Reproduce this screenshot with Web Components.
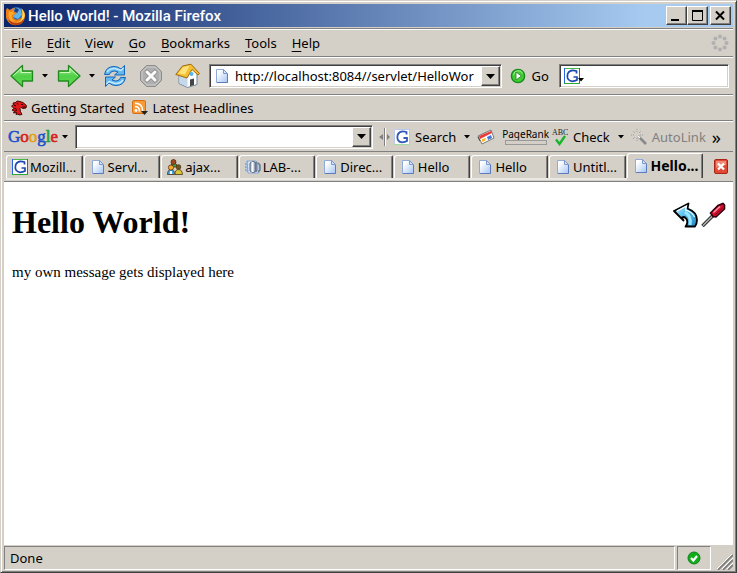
<!DOCTYPE html>
<html lang="en">
<head>
<meta charset="utf-8">
<title>Hello World! - Mozilla Firefox</title>
<style>
  html, body { height: 100%; margin: 0; }
  body { font: 13px/18px "Noto Sans", "Open Sans", sans-serif; color: #000; background: #d4d0c8; }
</style>
</head>
<body>
<browser-window>
  <title-bar slot="chrome">Hello World! - Mozilla Firefox</title-bar>
  <menu-bar slot="chrome"></menu-bar>
  <nav-bar slot="chrome"></nav-bar>
  <bookmark-bar slot="chrome">
    <book-mark icon="dino">Getting Started</book-mark>
    <book-mark icon="rss">Latest Headlines</book-mark>
  </bookmark-bar>
  <google-bar slot="chrome"></google-bar>
  <tab-strip slot="chrome">
    <page-tab icon="g">Mozill...</page-tab>
    <page-tab icon="page">Servl...</page-tab>
    <page-tab icon="people">ajax...</page-tab>
    <page-tab icon="lab">LAB-...</page-tab>
    <page-tab icon="page">Direc...</page-tab>
    <page-tab icon="page">Hello</page-tab>
    <page-tab icon="page">Hello</page-tab>
    <page-tab icon="page">Untitl...</page-tab>
    <page-tab icon="page" active>Hello...</page-tab>
  </tab-strip>
  <hello-page></hello-page>
  <status-bar slot="status">Done</status-bar>
</browser-window>
<script>
const ICONS = {
  firefox: [20, 20, `<circle cx="10.500" cy="9" r="8" fill="#2a62b8"/><path d="M7 3q4-3 8 1l1 5-4 4-5-2z" fill="#5fb4e8"/><path d="M9 2q3 0 4 2l-2 3-3-1z" fill="#1c3f8c"/><path d="M1 2l3 2q2-2 5-2L7 5l4 2-3 2-1 2q2 4 6 2 4-1 3-6l-1-5q5 4 4 9-1 7-8 8-7 1-10-5-3-6 0-12z" fill="#ee7d16"/><path d="M3 5l2 1 3-1-1 2 2 1-3 1q-1 5 4 6-5 2-7-3-1-3 0-7z" fill="#f9a92c"/><path d="M16 3q4 5 2 9-3 5-8 4 6 0 6-5 1-3 0-8z" fill="#fce05a"/><path d="M2 13q4 5 10 4 4-1 6-4-2 6-8 6t-8-6z" fill="#b63c12"/>`],
  back: [26, 24, `<defs><linearGradient id="a" x2="0" y2="1"><stop stop-color="#b4f0a0"/><stop offset=".5" stop-color="#4fd048"/><stop offset="1" stop-color="#64dc50"/></linearGradient></defs><path d="M2 12L13.500 1.500V7H23.500V17H13.500V22.500z" fill="url(#a)" stroke="#218a1f" stroke-width="1.300" stroke-linejoin="round"/><path d="M4 12l8-7.500V8.500H22" fill="none" stroke="#d0f8c0"/>`],
  forward: [26, 24, `<defs><linearGradient id="a" x2="0" y2="1"><stop stop-color="#b4f0a0"/><stop offset=".5" stop-color="#4fd048"/><stop offset="1" stop-color="#64dc50"/></linearGradient></defs><path d="M24 12L12.500 1.500V7H2.500V17H12.500V22.500z" fill="url(#a)" stroke="#218a1f" stroke-width="1.300" stroke-linejoin="round"/><path d="M22 12l-8-7.500V8.500H4" fill="none" stroke="#d0f8c0"/>`],
  reload: [24, 24, `<g stroke="#1766b8" fill="#64b8f0" stroke-linejoin="round"><path d="M1.500 10.500Q3 2.500 11 2.500q4 0 7 2.500l3.500-3.500v9.500h-10l3.500-3q-4-2-7 0-1 1-1.500 2.500z"/><path d="M22.500 13.500Q21 21.500 13 21.500q-4 0-7-2.500l-3.500 3.500V13h10l-3.500 3q4 2 7 0 1-1 1.500-2.500z"/></g><path d="M4 8q3-4 8-3.500l6 2 2.500-2.500M20 16q-3 4-8 3.500l-6-2-2.500 2.500" fill="none" stroke="#c4ecff" stroke-width="1.500"/>`],
  stop: [24, 24, `<path d="M7.500 1.500h9l6 6v9l-6 6h-9l-6-6v-9z" fill="#b0b0b0" stroke="#8c8c8c"/><path d="M8 3h8l5 5v8l-5 5H8l-5-5V8z" fill="none" stroke="#c8c8c8"/><path d="M8 8l8 8M16 8l-8 8" stroke="#969696" stroke-width="5" stroke-linecap="round"/><path d="M8 8l8 8M16 8l-8 8" stroke="#fafafa" stroke-width="3" stroke-linecap="round"/>`],
  home: [26, 26, `<path d="M4 11v9.500l8.500 4L22 21.500V11L17 5z" fill="#fff" stroke="#73869c"/><path d="M4.500 11.500l8 2.500v10l-8-4z" fill="#c4d8ec"/><path d="M.800 11.500L7.500 3 16 1.200 24.500 10.500l-1.500 1.500L17 6.500 12 15z" fill="#f3bf30" stroke="#a06a10" stroke-linejoin="round"/><path d="M3 10.500L8.500 4l6-1.200-4.500 8.700z" fill="#ffe27c"/><path d="M15 16.500l4-1V22l-4 1.300z" fill="#444"/><circle cx="16.500" cy="11" r="2" fill="#54b3f0"/>`],
  page: [16, 16, `<defs><linearGradient id="a" x2="1" y2="1"><stop offset=".2" stop-color="#fff"/><stop offset="1" stop-color="#a4c4f4"/></linearGradient></defs><path d="M2.500 1.500h7l4 4v9h-11z" fill="url(#a)" stroke="#8fabdc"/><path d="M13.500 6v8.500H3" fill="none" stroke="#5c7cbc"/><path d="M9.500 1.500v4h4z" fill="#d4e4fc" stroke="#8098cc"/>`],
  go: [16, 16, `<circle cx="8" cy="8" r="6.600" fill="#3fcf35" stroke="#178b18" stroke-width="1.400"/><path d="M3.500 7Q4 3 8 2.700t4.500 3" fill="none" stroke="#a4f09a"/><path d="M6 4l5.500 4L6 12z" fill="#fff" stroke="#1d7d1c" stroke-width=".8"/>`],
  g: [16, 16, `<path fill="#fff" d="M0 0h16v16H0z"/><path d="M0 .500h16" stroke="#4ab848"/><path d="M.500 0v16" stroke="#2864e0"/><path d="M15.500 0v16" stroke="#e02820"/><path d="M0 15.500h16" stroke="#30a838"/><path d="M12.500 5.500V3Q6 .800 3.800 5.500 2 12.500 8 13.300q3 0 5-1.300V9H9.500" fill="none" stroke="#1c48b0" stroke-width="1.700"/>`],
  gpale: [16, 16, `<path fill="#fff" d="M0 0h16v16H0z"/><path d="M.500 16V.500H16" stroke="#b8c8f0" fill="none"/><path d="M15.500 1v14.500H0" stroke="#a0dca0" fill="none"/><path d="M15.500 1v8" stroke="#f4b4b0"/><path d="M12.500 5.500V3Q6 .800 3.800 5.500 2 12.500 8 13.300q3 0 5-1.300V9H9.500" fill="none" stroke="#3058b8" stroke-width="1.800"/>`],
  dino: [16, 16, `<path d="M.500 6l2-1.500L2 3l3-.500L6 1l3 .500 3 1 3.500 3-.500 2.500-3 .500-2-1-1 1 .500 3 1.500 3-3 .500L7 14l-2 .500.500-2-3 .500 1-2L1 10l2-1.500z" fill="#e01818" stroke="#300" stroke-width=".9"/><path d="M3 5l2 1M3.500 8.500l2 .500M4 11l2-1M6 3l1 1.500M10 4.500h2M11.500 7h3" stroke="#200" fill="none"/>`],
  rss: [16, 16, `<rect x=".500" y=".500" width="13" height="13" rx="1.500" fill="#f79a38" stroke="#d87018"/><circle cx="4" cy="10.500" r="1.400" fill="#fff"/><path d="M3 6.500q4.500 0 4.500 5M3 3.300q7.700 0 7.700 8" fill="none" stroke="#fff" stroke-width="1.600"/><path d="M9 11h7l-3.500 4z" fill="#222"/>`],
  people: [16, 16, `<g stroke="#503010" stroke-width=".8"><path d="M4 8q0-4 3-4t3 4z" fill="#3a5"/><circle cx="6.500" cy="3" r="2.500" fill="#a04820"/><path d="M8 15.500q0-5 3.500-5t4 5z" fill="#d8c838"/><circle cx="11.500" cy="8" r="2.300" fill="#6c5c18"/><path d="M.500 15.500q0-5 3.500-5t3.500 5z" fill="#38a8f0"/><circle cx="4" cy="8.500" r="2.600" fill="#ffa828"/></g><path d="M3 12h2v3H3z" fill="#fff"/>`],
  lab: [16, 16, `<path d="M2 2h9l3 3v9H3z" fill="#e4ecf8" stroke="#8aa4cc"/><path d="M2.500 2v12M.800 4v8" stroke="#7aaae8" fill="none" stroke-width="1.500" stroke-dasharray="2 1"/><path d="M5 4q3-3 7 0v8q-4 3-7 0z" fill="#a8b4c4" stroke="#53637c"/><path d="M7.500 3v10" stroke="#fff" stroke-width="2"/><path d="M10.500 3v10M13 4l2 2v5l-2 2" fill="none" stroke="#66788e" stroke-width="1.500"/>`],
  card: [18, 16, `<path d="M1 7l13-6 3 8-12 6z" fill="#fff" stroke="#777"/><path d="M2 7l12-5 1 2L3 10z" fill="#e83c3c"/><path d="M5 10l4-1-1 3-3 1z" fill="#f6b828"/><path d="M10 8l4-2 1 3-4 2z" fill="#4478d8"/><path d="M3 12L1 8" stroke="#444"/>`],
  abc: [16, 18, `<text x="0" y="7" font-family="Liberation Serif, serif" font-size="8" fill="#222">ABC</text><path d="M4 11.500l3.500 4.500L13 8" fill="none" stroke="#17b52a" stroke-width="2.400"/>`],
  wand: [16, 16, `<path d="M7 7l8 8" stroke="#888" stroke-width="2.500"/><path d="M7 7l2 2" stroke="#fff" stroke-width="1.500"/><path d="M6 0v3m0 6v3M0 6h3m6 0h3M2 2l2 2m4 0l2-2M2 10l2-2" stroke="#999" stroke-dasharray="1 1"/>`],
  closetab: [16, 16, `<rect x="1.500" y=".500" width="13" height="14" rx="1.500" fill="#df4a34" stroke="#a82414"/><path d="M3 2h10v4q-5 0-10 3z" fill="#f08a74"/><path d="M5 4.500l6 6M11 4.500l-6 6" stroke="#fff" stroke-width="2.400"/>`],
  ok: [14, 14, `<circle cx="7" cy="7" r="6" fill="#12ad1c" stroke="#0a8414"/><path d="M4 7l2.300 2.500L10 5" fill="none" stroke="#fff" stroke-width="2.200"/>`],
  arrow: [26, 26, `<defs><linearGradient id="a" x2="1" y2="1"><stop stop-color="#dff6ff"/><stop offset=".4" stop-color="#62c4ee"/><stop offset="1" stop-color="#2088c0"/></linearGradient></defs><path d="M1 9L15.500 1.500l-1 5Q24 10 24 18q0 4-2 6.500H12.500q3-3.500 1-7.500-2-3-4.500-1.500l1.500 3z" fill="url(#a)" stroke="#000" stroke-width="1.800" stroke-linejoin="round"/><path d="M4 9l9.500-5-1 4q7 2 9 7" fill="none" stroke="#fff" stroke-width="1.200"/><path d="M12 10q7 5 5 13" fill="none" stroke="#9ae4ff" stroke-width="3"/>`],
  driver: [26, 26, `<path d="M2.500 24L13 13.500" stroke="#333" stroke-width="3.500"/><path d="M3 23.500L13 13.500" stroke="#bbb" stroke-width="1.200"/><path d="M10.500 11l7.500-7.500 5-2 1.500 1.500v4l-8.500 8-3-.500z" fill="#d40f30" stroke="#300010" stroke-width="1.600"/><path d="M13.500 10.500l6.500-6" stroke="#ff90a0" stroke-width="1.500"/><path d="M15 13l8-7.500" stroke="#7c0018"/>`],
  throb: [18, 18, `<g fill="#b0b0b0"><circle cx="9" cy="2.500" r="2"/><circle cx="13.600" cy="4.400" r="2"/><circle cx="15.500" cy="9" r="2"/><circle cx="13.600" cy="13.600" r="2"/><circle cx="9" cy="15.500" r="2"/><circle cx="4.400" cy="13.600" r="2"/><circle cx="2.500" cy="9" r="2"/><circle cx="4.400" cy="4.400" r="2"/></g>`],
  drop: [7, 4, `<path d="M0 0h6L3 3.500z" fill="#000"/>`],
  bigdrop: [9, 5, `<path d="M0 0h9L4.500 5z" fill="#000"/>`],
  min: [15, 13, `<path d="M2 10h8v2H2z"/>`],
  max: [15, 13, `<path d="M2.500 2.500h10v9h-10z" fill="none" stroke="#000"/><path d="M2 2h11" stroke="#000" stroke-width="2"/>`],
  x: [15, 13, `<path d="M3 2.500l8 8M11 2.500l-8 8" stroke="#000" stroke-width="2"/>`],
  split: [11, 18, `<path d="M5.500 0v18" stroke="#808080"/><path d="M6.500 0v18" stroke="#fff"/><path d="M0 9l4-3v6zM11 9L8 6v6z" fill="#808080"/>`],
  grip: [16, 16, `<path d="M1 16L16 1M6 16L16 6M11 16l5-5" stroke="#808080" stroke-width="1.800"/><path d="M0 15L15 0M5 15L16 4M10 15l6-6" stroke="#fff"/>`]
};

function define(name, css, html) {
  const tpl = document.createElement('template');
  customElements.define(name, class extends HTMLElement {
    connectedCallback() {
      if (this.shadowRoot) return;
      tpl.innerHTML = `<style>*{box-sizing:border-box}button{font:inherit;color:inherit;background:none;border:0;padding:0;margin:0;display:inline-flex;align-items:center}${css}</style>` +
        (typeof html === 'function' ? html(this) : html);
      this.attachShadow({ mode: 'open' }).append(tpl.content.cloneNode(true));
    }
  });
}

define('ui-icon', ':host{display:inline-block;flex:none;line-height:0}svg{display:block}', el => {
  const [w, h, body] = ICONS[el.getAttribute('name')];
  return `<svg width="${w}" height="${h}" viewBox="0 0 ${w} ${h}" aria-hidden="true">${body}</svg>`;
});

define('browser-window', `
  :host{display:flex;flex-direction:column;height:100vh;box-sizing:border-box;background:#d4d0c8;padding:3px 3px 2px 3px;
    border:1px solid;border-color:#d4d0c8 #404040 #404040 #d4d0c8;box-shadow:inset 1px 1px #fff,inset -1px -1px #808080}
  main{flex:1;min-height:0;background:#fff}`,
  '<slot name="chrome"></slot><main><slot></slot></main><slot name="status"></slot>');

define('title-bar', `
  :host{display:flex;align-items:center;height:23px;padding:0 2px;color:#fff;font-family:Roboto,sans-serif;font-size:15px;font-weight:500;flex:none;
    background:linear-gradient(90deg,#0a246a,#a6caf0 88%)}
  .t{flex:1;margin-left:2px;white-space:nowrap}
  .w{display:flex}
  .w button{width:21px;height:19px;justify-content:center;background:#d4d0c8;border:1px solid;border-color:#fff #404040 #404040 #fff;box-shadow:inset -1px -1px #808080}
  .w button:last-child{margin-left:2px}`,
  `<ui-icon name="firefox"></ui-icon><span class="t"><slot></slot></span>
  <div class="w"><button aria-label="Minimize"><ui-icon name="min"></ui-icon></button><button aria-label="Maximize"><ui-icon name="max"></ui-icon></button><button aria-label="Close"><ui-icon name="x"></ui-icon></button></div>`);

const ROW = 'border-top:1px solid #808080;box-shadow:inset 0 1px #fff;box-sizing:border-box;flex:none;display:flex;align-items:center;white-space:nowrap;';

define('menu-bar', `
  :host{${ROW}height:28px;margin-top:1px;padding:1px 4px 0 0}
  nav{display:flex;flex:1}button{padding:0 8px 0 7px}
  u{text-underline-offset:3px}`,
  `<nav>${['File', 'Edit', 'View', 'Go', 'Bookmarks', 'Tools', 'Help'].map(s => `<button><span><u>${s[0]}</u>${s.slice(1)}</span></button>`).join('')}</nav><ui-icon name="throb"></ui-icon>`);

const FIELD = 'background:#fff;border:1px solid;border-color:#808080 #fff #fff #808080;box-shadow:inset 1px 1px #404040,inset -1px -1px #d4d0c8;display:flex;align-items:center;';
const INPUT = 'input{font:inherit;color:#000;border:0;outline:0;background:none;padding:0;flex:1;min-width:0;width:0}';
const COMBO = '.c{width:19px;height:20px;justify-content:center;background:#d4d0c8;border:1px solid;border-color:#fff #404040 #404040 #fff;box-shadow:inset -1px -1px #808080}';

define('nav-bar', `
  :host{${ROW}height:38px;padding:1px 4px 0 5px}
  .d{width:21px;justify-content:center}.stop{width:48px;justify-content:center}
  .url{${FIELD}flex:296 1 0;height:24px;padding:0 1px 0 4px;margin-left:8px;gap:5px}
  .go{gap:6px;margin:0 10px 0 8px}
  .s{${FIELD}flex:166 1 0;height:24px;padding:0 4px}
  .s ui-icon+ui-icon{margin:7px 0 0 -2px}
  ${INPUT}${COMBO}`,
  `<button aria-label="Back"><ui-icon name="back"></ui-icon></button><button class="d" aria-label="Back history"><ui-icon name="drop"></ui-icon></button>
  <button aria-label="Forward"><ui-icon name="forward"></ui-icon></button><button class="d" aria-label="Forward history"><ui-icon name="drop"></ui-icon></button>
  <button aria-label="Reload"><ui-icon name="reload"></ui-icon></button><button class="stop" aria-label="Stop"><ui-icon name="stop"></ui-icon></button><button aria-label="Home"><ui-icon name="home"></ui-icon></button>
  <div class="url"><ui-icon name="page"></ui-icon><input aria-label="Address" value="http://localhost:8084//servlet/HelloWor"><button class="c" aria-label="Show history"><ui-icon name="bigdrop"></ui-icon></button></div>
  <button class="go"><ui-icon name="go"></ui-icon><span>Go</span></button>
  <div class="s"><button aria-label="Choose engine"><ui-icon name="g"></ui-icon><ui-icon name="drop"></ui-icon></button><input aria-label="Web search"></div>`);

define('bookmark-bar', `:host{${ROW}height:26px;padding:1px 7px 0;gap:8px}`, '<slot></slot>');
define('book-mark', ':host{display:block}a{display:flex;align-items:center;gap:4px;color:#000;text-decoration:none}',
  el => `<a href="#"><ui-icon name="${el.getAttribute('icon')}"></ui-icon><span><slot></slot></span></a>`);

define('google-bar', `
  :host{${ROW}height:31px;padding:1px 12px 0 4px}
  .logo{font:17px/20px "Liberation Serif",serif;gap:4px;-webkit-text-stroke:.6px;margin-right:6px}
  .q{${FIELD}flex:1;height:24px;padding:0 1px 0 4px;margin-right:6px}
  .split{margin-right:4px}
  .b{gap:5px}.b ui-icon:last-child{margin:0 6px 0 3px}
  .pr{font:10px/12px "Noto Sans",sans-serif;display:flex;flex-direction:column;align-items:center;margin:0 3px 0 7px}
  .pr i{width:42px;height:5px;border:1px solid #999}
  .off{color:#808080;gap:5px}
  .more{margin-left:6px;font-size:18px;line-height:20px;height:20px}
  ${INPUT}${COMBO}`,
  `<button class="logo"><span><span style="color:#1c50c8">G</span><span style="color:#d82020">o</span><span style="color:#e0a010">o</span><span style="color:#1c50c8">g</span><span style="color:#20a038">l</span><span style="color:#d82020">e</span></span><ui-icon name="drop"></ui-icon></button>
  <div class="q"><input aria-label="Google search"><button class="c" aria-label="Search history"><ui-icon name="bigdrop"></ui-icon></button></div>
  <ui-icon class="split" name="split"></ui-icon>
  <button class="b"><ui-icon name="gpale"></ui-icon><span>Search</span><ui-icon name="drop"></ui-icon></button>
  <button aria-label="News"><ui-icon name="card"></ui-icon></button>
  <div class="pr"><span>PageRank</span><i></i></div>
  <button class="b"><ui-icon name="abc"></ui-icon><span>Check</span><ui-icon name="drop"></ui-icon></button>
  <button class="off" disabled><ui-icon name="wand"></ui-icon><span>AutoLink</span></button>
  <button class="more" aria-label="More">»</button>`);

define('tab-strip', `
  :host{${ROW}height:31px;box-shadow:none;padding:1px 0 1px 2px;align-items:stretch;border-bottom:1px solid #808080}
  .tabs{display:flex;flex:1;min-width:0}
  .x{width:29px;padding-right:4px;justify-content:flex-end}`,
  '<div class="tabs" role="tablist"><slot></slot></div><button class="x" aria-label="Close tab"><ui-icon name="closetab"></ui-icon></button>');

define('page-tab', `
  :host{display:flex;flex:1 1 0;min-width:0;padding-top:2px;box-sizing:border-box;border-bottom:2px solid #eae8e4}
  :host([active]){padding-top:0;font-weight:700;font-size:14px;border-bottom-color:transparent}
  button{flex:1;min-width:0;gap:2px;padding:0 3px 0 5px;border:1px solid;border-color:#fff #404040 transparent #fff;border-bottom:0;border-radius:3px 2px 0 0;box-shadow:inset -1px 0 #808080;margin-right:1px;overflow:hidden;white-space:nowrap}`,
  el => `<button role="tab" aria-selected="${el.hasAttribute('active')}"><ui-icon name="${el.getAttribute('icon')}"></ui-icon><span><slot></slot></span></button>`);

define('hello-page', `
  :host{display:flex;justify-content:space-between;align-items:flex-start;padding:20px 7px 8px 8px;font-family:"Liberation Serif",serif}
  h1{font-size:32px;line-height:40px;margin:0 0 20px}p{font-size:15px;line-height:20px;margin:0}
  .tools{display:flex;gap:1px}`,
  `<article><h1>Hello World!</h1><p>my own message gets displayed here</p></article>
  <div class="tools"><button aria-label="Return"><ui-icon name="arrow"></ui-icon></button><button aria-label="Settings"><ui-icon name="driver"></ui-icon></button></div>`);

define('status-bar', `
  :host{display:flex;flex:none;height:25px;padding-top:1px;gap:2px;box-sizing:border-box}
  .p{border:1px solid;border-color:#808080 #fff #fff #808080;display:flex;align-items:center}
  .m{flex:1;padding-left:5px}.ok{width:34px;justify-content:center}
  .g{width:20px;display:flex;align-items:flex-end;justify-content:flex-end}`,
  '<div class="p m"><slot></slot></div><div class="p ok"><ui-icon name="ok"></ui-icon></div><div class="g"><ui-icon name="grip"></ui-icon></div>');
</script>
</body>
</html>
